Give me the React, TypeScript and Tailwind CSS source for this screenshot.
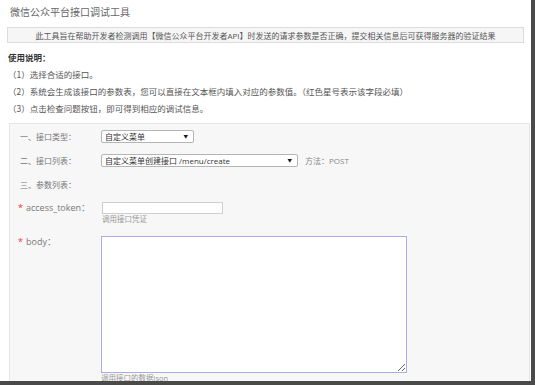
const font = "font-['Open_Sans','Noto_Sans_CJK_SC',sans-serif]";
const cjk = "font-['Noto_Sans_CJK_SC',sans-serif]";

function FakeSelect({ width, value }: { width: string; value: string }) {
  return (
    <div
      className={`${width} h-[13px] bg-white border border-[#b5b5b5] rounded-[2px] flex items-center justify-between pl-[3px] pr-[5px] text-[8px] leading-[11px] text-[#333]`}
    >
      <span>{value}</span>
      <span className="text-[4.5px] leading-[5px] text-[#111]">▼</span>
    </div>
  );
}

function Label({ children, required, latin }: { children: React.ReactNode; required?: boolean; latin?: boolean }) {
  return (
    <div className={`${latin ? "text-[9px]" : "text-[8px]"} leading-[11px] text-[#777] whitespace-nowrap`}>
      {required && <span className="text-[#e33] mr-[3px]">*</span>}
      {children}
    </div>
  );
}

export default function App() {
  return (
    <div className={`w-[535px] h-[385px] bg-white ${font} overflow-hidden`}>
      <div className="w-[535px] h-[385px] border-r-[4px] border-b-[4px] border-[#4a4a4a] overflow-hidden">
        <div className="pl-[10px] pt-[5px] text-[10px] leading-[14px] text-[#666]">微信公众平台接口调试工具</div>

        <div className="mx-[7px] mt-[8px] h-[16px] border border-[#dcdcdc] bg-[#f6f6f6] flex items-center justify-center text-[8px] leading-[11px] text-[#555]">
          此工具旨在帮助开发者检测调用【微信公众平台开发者API】时发送的请求参数是否正确，提交相关信息后可获得服务器的验证结果
        </div>

        <div className={`pl-[8px] mt-[6px] text-[8.5px] leading-[17px] text-[#555] ${cjk}`}>
          <div className="font-bold text-[#333]">使用说明：</div>
          <div>（1）选择合适的接口。</div>
          <div>（2）系统会生成该接口的参数表，您可以直接在文本框内填入对应的参数值。（红色星号表示该字段必填）</div>
          <div>（3）点击检查问题按钮，即可得到相应的调试信息。</div>
        </div>

        <div className="ml-[9px] mr-[1px] mt-[6px] border border-[#e6e6e6] bg-[#f7f7f7] pl-[10px] pb-[10px]">
          <div className="grid grid-cols-[81px_1fr]">
            <div className="h-[24px] flex items-center">
              <Label>一、接口类型：</Label>
            </div>
            <div className="h-[24px] flex items-center">
              <FakeSelect width="w-[93px]" value="自定义菜单" />
            </div>

            <div className="h-[24px] flex items-center">
              <Label>二、接口列表：</Label>
            </div>
            <div className="h-[24px] flex items-center gap-[7px]">
              <FakeSelect width="w-[197px]" value="自定义菜单创建接口 /menu/create" />
              <span className="text-[8px] leading-[11px] text-[#888]">方法：POST</span>
            </div>

            <div className="h-[24px] flex items-center">
              <Label>三、参数列表：</Label>
            </div>
            <div className="h-[24px]" />

            <div className="pt-[6px] -ml-[2px]">
              <Label required latin>access_token：</Label>
            </div>
            <div className="pt-[6px] pl-[1px]">
              <div className="w-[121px] h-[12px] bg-white border border-[#cfcfcf]" />
              <div className="text-[7.5px] leading-[11px] text-[#999]">调用接口凭证</div>
            </div>

            <div className="pt-[11px] -ml-[2px]">
              <Label required latin>body：</Label>
            </div>
            <div className="pt-[11px]">
              <textarea className="block w-[306px] h-[137px] bg-white border border-[#a9aee6] outline-none resize" />
              <div className="text-[7.5px] leading-[11px] text-[#999]">调用接口的数据json</div>
            </div>
          </div>
        </div>
      </div>
    </div>
  );
}
